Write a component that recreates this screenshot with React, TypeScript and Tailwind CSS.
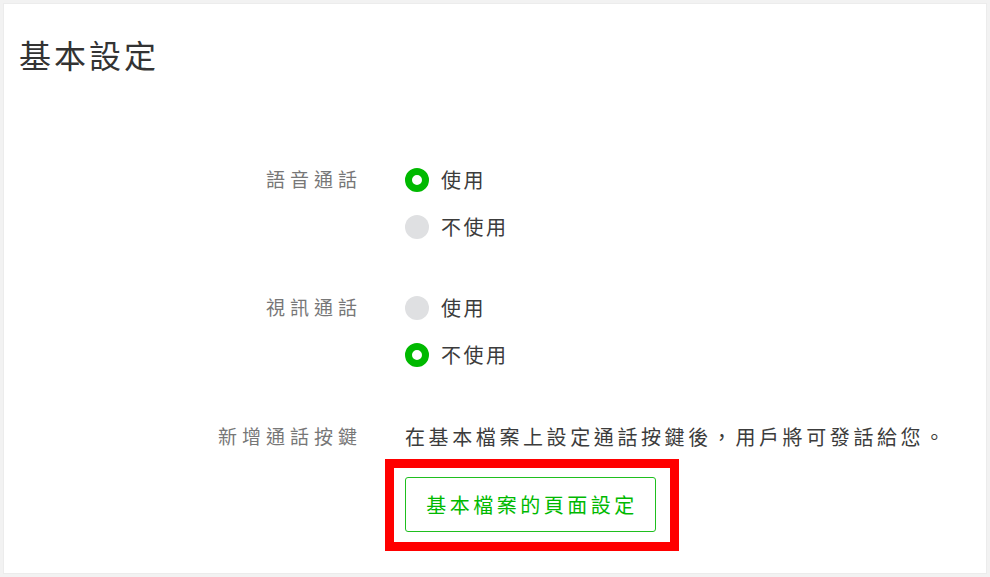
import React from "react"

const font = { fontFamily: '"Noto Sans CJK TC", "Noto Sans", sans-serif' }

function Radio({ checked, label }: { checked: boolean; label: string }) {
  return (
    <div className="flex h-[47px] items-center">
      {checked ? (
        <span className="box-border h-[24px] w-[24px] rounded-full border-[7px] border-[#00b900] bg-white" />
      ) : (
        <span className="h-[24px] w-[24px] rounded-full bg-[#dfe0e2]" />
      )}
      <span className="ml-[12px] text-[20px] tracking-[2.5px] text-[#3c3c3c]">{label}</span>
    </div>
  )
}

function Row({ label, children }: { label: string; children: React.ReactNode }) {
  return (
    <div className="flex">
      <div className="flex h-[47px] w-[358px] shrink-0 items-center justify-end text-[19px] tracking-[5px] text-[#777]">
        {label}
      </div>
      <div className="ml-[43px] flex-1">{children}</div>
    </div>
  )
}

export default function App() {
  return (
    <div className="h-[577px] w-[990px] bg-[#f2f2f2] p-[3px]" style={font}>
      <div className="h-full w-full border border-[#ececec] bg-white">
        <h1 className="pl-[15px] pt-[30px] text-[32px] leading-[40px] tracking-[3px] text-[#333]">基本設定</h1>

        <div className="mt-[82px] flex flex-col">
          <Row label="語音通話">
            <Radio checked label="使用" />
            <Radio checked={false} label="不使用" />
          </Row>

          <div className="mt-[34px]">
            <Row label="視訊通話">
              <Radio checked={false} label="使用" />
              <Radio checked label="不使用" />
            </Row>
          </div>

          <div className="mt-[35px]">
            <Row label="新增通話按鍵">
              <div className="flex h-[47px] items-center text-[20px] tracking-[3.6px] text-[#3c3c3c]">
                在基本檔案上設定通話按鍵後，用戶將可發話給您。
              </div>
              <div className="relative mt-[17px] w-[251px]">
                <button className="flex h-[55px] w-[251px] items-center justify-center rounded-[3px] border border-[#1fbf1f] bg-white pl-[3px] text-[20px] tracking-[3.5px] text-[#00b900]">
                  基本檔案的頁面設定
                </button>
                <div className="pointer-events-none absolute left-[-20px] top-[-18px] h-[92px] w-[294px] border-[9px] border-[#ff0000]" />
              </div>
            </Row>
          </div>
        </div>
      </div>
    </div>
  )
}
